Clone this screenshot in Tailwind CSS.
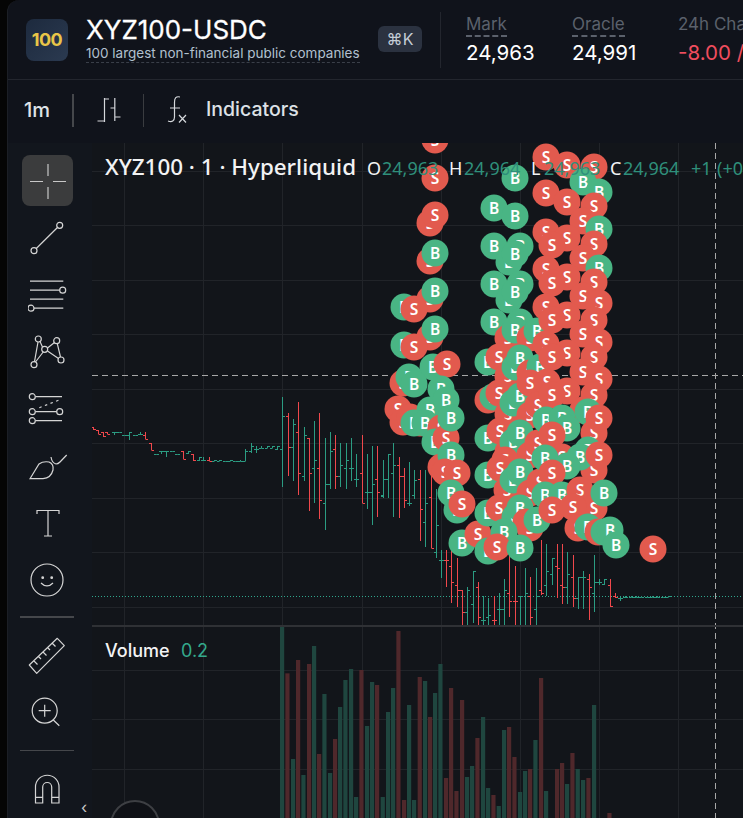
<!DOCTYPE html>
<html lang="en">

<head>
    <meta charset="UTF-8">
    <meta name="viewport" content="width=device-width, initial-scale=1.0">
    <title>XYZ100-USDC</title>
    <script src="https://cdn.jsdelivr.net/npm/@tailwindcss/browser@4"></script>
</head>

<body class="bg-[#050505] overflow-hidden font-['Inter',sans-serif]">
    <div class="ml-[7px] h-[818px] w-[736px] overflow-hidden rounded-tl-xl border-l border-[#1c1f26] bg-[#10131b] flex flex-col">

        <!-- market header -->
        <header class="h-[80px] shrink-0 border-b border-[#23262e] flex items-center pl-[18px] whitespace-nowrap">
            <div class="w-[42px] h-[42px] rounded-lg bg-gradient-to-br from-[#1d2a3e] to-[#2b3a50] flex items-center justify-center text-[#e9c648] text-[18px] font-bold tracking-[-0.5px] shrink-0">100</div>
            <div class="ml-[18px] w-[292px] shrink-0">
                <div class="text-[26px] leading-[30px] text-white mt-[-1px] [-webkit-text-stroke:0.3px_white]">XYZ100-USDC</div>
                <div class="text-[13.500px] leading-[16px] text-[#b2c0cf] border-b border-dashed border-[#3a3f49] w-fit pb-[1px]">100 largest non-financial public companies</div>
            </div>
            <div class="w-[44px] h-[26px] rounded-md bg-[#2b3240] text-[#c4ccd6] text-[16px] flex items-center justify-center shrink-0 mt-[-1px]">⌘K</div>
            <div class="w-px h-[56px] bg-[#23262e] ml-[18px] shrink-0"></div>
            <div class="ml-[25px] w-[106px] shrink-0">
                <div class="text-[#5b616c] text-[17px] leading-[21px] border-b-2 border-dashed border-[#5b616c] w-fit">Mark</div>
                <div class="text-white text-[20.500px] leading-[26px] mt-[3px]">24,963</div>
            </div>
            <div class="w-[106px] shrink-0">
                <div class="text-[#5b616c] text-[17px] leading-[21px] border-b-2 border-dashed border-[#5b616c] w-fit">Oracle</div>
                <div class="text-white text-[20.500px] leading-[26px] mt-[3px]">24,991</div>
            </div>
            <div class="shrink-0">
                <div class="text-[#5b616c] text-[17px] leading-[21px] pb-[2px]">24h Change</div>
                <div class="text-[#ef4d5e] text-[20.500px] leading-[26px] mt-[3px]">-8.00 / -0.03%</div>
            </div>
        </header>

        <!-- chart toolbar -->
        <div class="h-[63px] shrink-0 flex items-center text-[#dfe3e8] pb-[3px]">
            <div class="w-[64px] pl-[16px] text-[20px] font-medium">1m</div>
            <div class="w-[2px] h-[33px] bg-[#45474b]"></div>
            <div class="w-[69px] flex justify-center">
                <svg width="28" height="28" viewBox="0 0 28 28" fill="none" stroke="#d5d8dc" stroke-width="1.200">
                    <path d="M9.500 2V26M9.500 3H14M2.500 25H9.500M19.800 2V25M15.500 12H19.800M19.800 21H25.500" />
                </svg>
            </div>
            <div class="w-px h-[33px] bg-[#3a3c40]"></div>
            <svg class="ml-[19px]" width="26" height="30" viewBox="0 0 26 30" fill="none" stroke="#d5d8dc" stroke-width="1.200">
                <path d="M17 2C13 1 11.500 3 11.500 7V22C11.500 26 9 27.500 5 26M7 13H17M16 20L23 27.500M23 20L16 27.500" />
            </svg>
            <div class="ml-[17px] text-[19.500px] font-medium text-[#dde1e6]">Indicators</div>
        </div>

        <div class="flex-1 flex min-h-0">
            <!-- drawing tools -->
            <aside class="w-[84px] shrink-0 bg-[#12161d] relative pt-[9px] pl-[14px]">
                <div class="w-[52px] h-[57px] flex items-center">
                    <div class="w-[51px] h-[51px] rounded-lg bg-[#3b3c3d] flex items-center justify-center">
                        <svg width="40" height="40" viewBox="0 0 40 40" fill="none" stroke="#c8c8c8" stroke-width="1.200">
                            <path d="M20 3V15M20 26V38M2 20.500H15M25 20.500H38" />
                        </svg>
                    </div>
                </div>
                <div class="w-[52px] h-[57px] flex items-center justify-center">
                    <svg width="40" height="40" viewBox="0 0 40 40" fill="none" stroke="#d5d5d5" stroke-width="1.200">
                        <path d="M8 30.700L29.700 9.300" />
                        <circle cx="31.700" cy="7.300" r="3" />
                        <circle cx="6" cy="32.700" r="3" />
                    </svg>
                </div>
                <div class="w-[52px] h-[57px] flex items-center justify-center">
                    <svg width="40" height="40" viewBox="0 0 40 40" fill="none" stroke="#d5d5d5" stroke-width="1.200">
                        <path d="M2 6.200H35.300M2 15.200H31.700M2 24.200H35.300M6 33.200H35.300" />
                        <circle cx="34.700" cy="15.200" r="3" />
                        <circle cx="3" cy="33.200" r="3" />
                    </svg>
                </div>
                <div class="w-[52px] h-[57px] flex items-center justify-center">
                    <svg width="40" height="40" viewBox="0 0 40 40" fill="none" stroke="#d5d5d5" stroke-width="1.200">
                        <path d="M6.500 29.700L10 10M7.500 30L15.200 20M14.500 15L12 9.500M19.500 16L26.500 10.500M19.500 19L30.500 26.500M29.300 11.700L32.500 25" />
                        <circle cx="10.300" cy="7" r="3" />
                        <circle cx="28.700" cy="8.700" r="3" />
                        <circle cx="16.700" cy="17.300" r="3" />
                        <circle cx="6" cy="32.700" r="3" />
                        <circle cx="33" cy="28" r="3" />
                    </svg>
                </div>
                <div class="w-[52px] h-[57px] flex items-center justify-center">
                    <svg width="40" height="40" viewBox="0 0 40 40" fill="none" stroke="#d5d5d5" stroke-width="1.200">
                        <path d="M7.500 7.700H34M7.500 22.700H28.700M7.500 31.700H34" />
                        <path d="M11.300 18.700L32 10.700" stroke-dasharray="2.500 3.500" />
                        <circle cx="4.300" cy="7.700" r="3" />
                        <circle cx="4.300" cy="22.700" r="3" />
                        <circle cx="31.700" cy="22.700" r="3" />
                        <circle cx="4.300" cy="31.700" r="3" />
                    </svg>
                </div>
                <div class="w-[52px] h-[57px] flex items-center justify-center">
                    <svg width="40" height="40" viewBox="0 0 40 40" fill="none" stroke="#d5d5d5" stroke-width="1.200">
                        <path d="M2 32.700L11 18Q15 15 21 16Q26 18 25 24Q23 32 15 32.700Z" />
                        <path d="M23 11Q24 17 28 18Q30 18 32 16L38.700 9" />
                    </svg>
                </div>
                <div class="w-[52px] h-[57px] flex items-center justify-center">
                    <svg width="40" height="40" viewBox="0 0 40 40" fill="none" stroke="#d5d5d5" stroke-width="1.200">
                        <path d="M9 11V7.500H31V11M20 7.500V33M16 33H24" />
                    </svg>
                </div>
                <div class="w-[52px] h-[57px] flex items-center justify-center">
                    <svg width="40" height="40" viewBox="0 0 40 40" fill="none" stroke="#d5d5d5" stroke-width="1.200">
                        <circle cx="19" cy="20" r="16" />
                        <path d="M13 23Q19 29 25 23" />
                        <circle cx="14.700" cy="17.700" r="0.800" fill="#d5d5d5" />
                        <circle cx="23.700" cy="17.700" r="0.800" fill="#d5d5d5" />
                    </svg>
                </div>
                <div class="w-[54px] h-[2px] bg-[#45474b] mt-[8px] mb-[8px] ml-[-2px]"></div>
                <div class="w-[52px] h-[57px] flex items-center justify-center">
                    <svg width="40" height="40" viewBox="0 0 40 40" fill="none" stroke="#d5d5d5" stroke-width="1.200" stroke-linejoin="round">
                        <path d="M1.300 30L29.300 3.300L36.300 10.700L8.700 38.300ZM6 26L9.500 29.500M10.500 21.500L13 24M15 17L18.500 20.500M19.500 12.500L22 15M24 8L27.500 11.500" />
                    </svg>
                </div>
                <div class="w-[52px] h-[57px] flex items-center justify-center">
                    <svg width="40" height="40" viewBox="0 0 40 40" fill="none" stroke="#d5d5d5" stroke-width="1.200">
                        <circle cx="16.700" cy="18.700" r="12.500" />
                        <path d="M10.700 18.700H22.700M16.700 12.700V24.700M25.300 28L31.300 33.700" />
                    </svg>
                </div>
                <div class="w-[54px] h-px bg-[#45474b] mt-[10px] mb-[9px] ml-[-2px]"></div>
                <div class="w-[52px] h-[57px] flex items-center justify-center">
                    <svg width="40" height="40" viewBox="0 0 40 40" fill="none" stroke="#d5d5d5" stroke-width="1.200">
                        <path d="M7.500 34V18A11.700 11.700 0 0 1 31 18V34H23.700V18A4.500 4.500 0 0 0 14.700 18V34ZM7.500 28.300H14.700M23.700 28.300H31" />
                    </svg>
                </div>
                <div class="absolute left-[73px] top-[656px] text-[#c8c8c8] text-[16px] leading-none">‹</div>
            </aside>

            <!-- chart -->
            <main class="flex-1 relative bg-[#12151a] overflow-hidden">
                <svg id="chart" class="block" width="651" height="675" viewBox="92 143 651 675"></svg>

                <div class="absolute left-[13px] top-[11px] flex items-baseline whitespace-nowrap font-['Noto_Sans',sans-serif] text-[18px] leading-[26px]">
                    <span class="text-[#f2f3f4] text-[22.400px] font-medium w-[262px]">XYZ100 · 1 · Hyperliquid</span>
                    <span class="text-[#f2f3f4] w-[15px]">O</span><span class="text-[#2f8f7b] w-[67px]">24,963</span>
                    <span class="text-[#f2f3f4] w-[15px]">H</span><span class="text-[#2f8f7b] w-[67px]">24,964</span>
                    <span class="text-[#f2f3f4] w-[13px]">L</span><span class="text-[#2f8f7b] w-[66px]">24,963</span>
                    <span class="text-[#f2f3f4] w-[13px]">C</span><span class="text-[#2f8f7b] w-[68px]">24,964</span>
                    <span class="text-[#2f8f7b] w-[26px]">+1</span><span class="text-[#2f8f7b]">(+0.00%)</span>
                </div>
                <div class="absolute left-[13px] top-[495px] flex items-baseline whitespace-nowrap text-[18px] leading-[26px]">
                    <span class="text-[#f2f3f4] font-medium w-[76px]">Volume</span>
                    <span class="text-[#34a98c]">0.2</span>
                </div>
                <div class="absolute left-[18px] top-[657px] w-[50px] h-[50px] rounded-full border-2 border-[#3d3f43] bg-[#0f1116]"></div>
            </main>
        </div>
    </div>

    <script>
        const GREEN = '#2b9c82';
        const RED = '#f0484c';
        const NS = 'http://www.w3.org/2000/svg';
        const chart = document.getElementById('chart');

        function add(tag, attrs, parent) {
            const el = document.createElementNS(NS, tag);
            for (const k in attrs) el.setAttribute(k, attrs[k]);
            (parent || chart).appendChild(el);
            return el;
        }

        // grid
        const gridColor = '#212429';
        [124, 203, 282, 362, 441, 520, 599, 678].forEach(x => add('line', { x1: x + .5, x2: x + .5, y1: 143, y2: 818, stroke: gridColor }));
        [171, 225, 280, 334, 389, 443, 498, 552, 607, 670, 719, 769].forEach(y => add('line', { x1: 92, x2: 743, y1: y + .5, y2: y + .5, stroke: gridColor }));

        // volume, [x, top, colour]
        const vol = [
            [66, 20, 'g'], [82, 160, 'r'], [99, 417, 'g'], [114, 120, 'r'], [130, 465, 'g'], [147, 132, 'r'], [162, 78, 'g'], [177, 402, 'r'],
            [193, 222, 'g'], [210, 459, 'g'], [225, 357, 'r'], [240, 261, 'g'], [256, 180, 'g'], [273, 147, 'g'], [288, 531, 'g'], [304, 150, 'r'],
            [321, 318, 'g'], [336, 186, 'g'], [351, 195, 'r'], [368, 531, 'g'], [384, 276, 'g'], [399, 204, 'g'], [415, 33, 'r'], [432, 540, 'r'],
            [447, 255, 'g'], [462, 540, 'g'], [479, 171, 'r'], [495, 183, 'g'], [510, 291, 'r'], [525, 219, 'g'], [541, 132, 'g'], [558, 474, 'r'],
            [573, 204, 'r'], [589, 513, 'r'], [606, 240, 'r'], [621, 471, 'g'], [636, 438, 'g'], [652, 354, 'r'], [669, 291, 'g'], [684, 504, 'g'],
            [700, 525, 'r'], [716, 558, 'g']
        ];
        vol.forEach(v => {
            const x = 260 + v[0] / 3, top = 620 + v[1] / 3;
            add('rect', { x: x - 2, y: top, width: 4.2, height: 818 - top, fill: v[2] === 'g' ? '#1f463f' : '#4f282b' });
        });
        const vol2 = [
            [12, 570, 'g'], [27, 561, 'r'], [43, 651, 'r'], [60, 756, 'g'], [75, 693, 'g'], [90, 687, 'r'], [106, 600, 'g'], [123, 414, 'r'],
            [138, 753, 'g'], [171, 687, 'r'], [186, 669, 'r'], [201, 732, 'g'], [217, 639, 'r'], [233, 687, 'g'], [249, 720, 'g'], [265, 714, 'r'],
            [282, 495, 'g'], [328, 819, 'r']
        ];
        vol2.forEach(v => {
            const x = 500 + v[0] / 3, top = 540 + v[1] / 3;
            add('rect', { x: x - 2, y: top, width: 4.2, height: 818 - top, fill: v[2] === 'g' ? '#1f463f' : '#4f282b' });
        });

        // main pane clip
        const defs = add('defs', {});
        const clip = add('clipPath', { id: 'pane' }, defs);
        add('rect', { x: 92, y: 143, width: 651, height: 482 }, clip);
        const pane = add('g', { 'clip-path': 'url(#pane)' });

        // last price line
        add('line', { x1: 92, x2: 743, y1: 596.5, y2: 596.5, stroke: '#2fa58c', 'stroke-dasharray': '1 2' }, pane);

        // crosshair sits under the trade bubbles
        add('line', { x1: 92, x2: 743, y1: 375.5, y2: 375.5, stroke: '#a8a8a8', 'stroke-dasharray': '6 4' }, pane);
        add('line', { x1: 715.5, x2: 715.5, y1: 143, y2: 818, stroke: '#a8a8a8', 'stroke-dasharray': '6 4' });

        // ohlc, read off zoomed crops: [x, high, low, open, close, colour]
        function bars(ox, oy, rows) {
            rows.forEach(r => {
                const x = Math.round(ox + r[0] / 3) + .5;
                const y = v => Math.round(oy + v / 3);
                const c = r[5] === 'r' ? RED : GREEN;
                add('path', {
                    d: `M${x} ${y(r[1])}V${y(r[2])}M${x - 2.5} ${y(r[3]) + .5}H${x}M${x} ${y(r[4]) + .5}H${x + 2.5}`,
                    stroke: c, fill: 'none', 'stroke-width': 1
                }, pane);
            });
        }
        bars(90, 390, [
            [8, 112, 120, 112, 118, 'r'], [23, 121, 133, 121, 133, 'r'], [39, 127, 142, 127, 137, 'r'], [52, 127, 133, 127, 133, 'r'], [72, 127, 134, 127, 127, 'g'], [88, 127, 127, 127, 127, 'g'],
            [103, 136, 136, 136, 136, 'g'], [118, 127, 149, 136, 127, 'g'], [136, 136, 136, 136, 136, 'g'], [151, 127, 136, 133, 133, 'g'], [166, 127, 148, 136, 148, 'r'], [182, 160, 181, 160, 181, 'r'],
            [198, 193, 193, 193, 193, 'g'], [214, 184, 192, 184, 184, 'g'], [229, 184, 200, 184, 184, 'g'], [246, 184, 184, 184, 184, 'g'], [262, 193, 193, 193, 193, 'g'], [278, 184, 208, 184, 208, 'r'],
            [293, 184, 191, 190, 184, 'g'], [310, 193, 214, 193, 211, 'r'], [326, 202, 214, 211, 202, 'g'], [340, 202, 214, 211, 211, 'g'], [358, 202, 214, 211, 214, 'r'], [372, 211, 214, 214, 211, 'g'],
            [388, 211, 214, 214, 211, 'g'], [405, 212, 214, 214, 214, 'g'], [420, 211, 214, 214, 211, 'g'], [435, 212, 214, 214, 214, 'g'], [450, 211, 214, 214, 214, 'g'], [466, 178, 214, 214, 184, 'g'],
            [484, 160, 190, 184, 169, 'g'], [499, 169, 190, 178, 178, 'g'], [514, 169, 175, 175, 175, 'g'], [530, 169, 175, 175, 169, 'g'], [547, 169, 175, 175, 169, 'g'], [562, 169, 181, 178, 169, 'g'],
            [577, 22, 290, 178, 78, 'g'], [595, 70, 258, 78, 170, 'r'], [610, 88, 272, 170, 103, 'g'], [625, 37, 315, 127, 250, 'r'], [643, 112, 272, 259, 136, 'g'], [657, 145, 362, 145, 250, 'r'],
            [673, 94, 338, 235, 211, 'g'], [688, 70, 386, 235, 331, 'r'], [706, 145, 419, 340, 283, 'g'], [721, 127, 296, 283, 184, 'g'], [736, 136, 296, 178, 259, 'r'], [751, 160, 290, 259, 226, 'g'],
            [769, 160, 296, 235, 211, 'g'], [784, 145, 272, 235, 235, 'g'], [799, 193, 290, 268, 268, 'g'], [817, 136, 338, 250, 338, 'r'], [832, 193, 356, 307, 307, 'g'], [847, 168, 404, 307, 283, 'g'],
            [862, 168, 380, 268, 307, 'r'], [880, 210, 323, 316, 268, 'g'], [895, 193, 323, 268, 193, 'g']
        ]);
        bars(380, 340, [
            [10, 360, 467, 467, 417, 'g'], [25, 343, 472, 417, 343, 'g'], [40, 310, 530, 400, 376, 'g'], [58, 352, 535, 376, 408, 'r'], [73, 385, 505, 408, 480, 'r'], [88, 366, 497, 490, 490, 'g'],
            [103, 390, 478, 465, 420, 'g'], [120, 390, 603, 418, 508, 'r'], [135, 390, 620, 546, 490, 'g'], [152, 405, 625, 472, 625, 'r'], [167, 447, 653, 636, 556, 'g']
        ]);
        bars(440, 550, [
            [3, 0, 85, 30, 30, 'g'], [19, 0, 110, 30, 30, 'r'], [34, 0, 160, 48, 97, 'r'], [52, 23, 170, 105, 120, 'r'], [67, 120, 225, 120, 187, 'r'], [82, 110, 225, 187, 121, 'g'],
            [98, 63, 218, 162, 63, 'g'], [115, 96, 225, 112, 202, 'r'], [130, 138, 225, 210, 210, 'g'], [145, 144, 225, 202, 195, 'g'], [163, 138, 225, 210, 210, 'r'], [178, 128, 225, 178, 178, 'g'],
            [193, 87, 225, 178, 121, 'g'], [208, 0, 200, 130, 154, 'r'], [226, 48, 225, 154, 154, 'r']
        ]);
        bars(500, 540, [
            [61, 168, 255, 168, 168, 'g'], [76, 84, 255, 255, 160, 'g'], [91, 111, 255, 169, 232, 'r'],
            [109, 84, 255, 208, 169, 'g'], [124, 0, 165, 151, 160, 'r'], [139, 12, 168, 136, 94, 'g'], [157, 54, 135, 103, 55, 'g'], [172, 12, 174, 79, 85, 'r'], [187, 12, 192, 136, 142, 'r'],
            [202, 36, 192, 142, 103, 'g'], [220, 45, 202, 112, 175, 'r'], [235, 112, 207, 175, 112, 'g'], [250, 93, 207, 112, 112, 'g'], [268, 102, 240, 118, 142, 'r'], [283, 45, 216, 160, 127, 'g'],
            [298, 117, 135, 127, 127, 'g'], [313, 118, 135, 133, 118, 'g'], [331, 117, 200, 136, 199, 'r'], [346, 160, 174, 169, 172, 'r'], [361, 172, 183, 175, 175, 'g'], [376, 169, 175, 172, 172, 'g'],
            [392, 169, 172, 172, 172, 'g'], [408, 169, 172, 172, 172, 'g'], [424, 169, 172, 172, 172, 'g'], [440, 171, 172, 172, 172, 'g'], [456, 169, 172, 172, 172, 'g'], [472, 169, 172, 172, 172, 'g'],
            [488, 171, 172, 172, 172, 'g'], [504, 169, 172, 172, 169, 'g']
        ]);

        // trade bubbles, in draw order
        const trades = 'S435,140 S435,178 B515,178 S430,223 S435,215 S430,261 B435,253 B404,307 S430,299 B435,291 S414,309 B404,345 S430,337 B435,329 S414,347 ' +
            'B433,367 S447,364 S403,383 B409,377 B414,384 S398,409 S403,422 S410,417 S420,423 B430,410 B414,423 B425,423 B441,389 B446,400 S441,428 B435,442 S446,438 B451,418 S441,467 B451,455 S445,472 S457,473 B451,493 B457,510 S462,504 B462,543 S478,534 ' +
            'B494,208 B515,216 B494,246 B520,246 B509,262 B515,254 B494,284 B520,284 B509,300 B515,292 B494,322 B520,322 S508,338 B515,330 S530,338 B537,331 ' +
            'B488,362 S499,357 S508,376 B515,367 B520,358 S530,373 B540,367 S488,400 B493,397 S499,393 S508,414 B513,403 B520,396 S530,383 S530,415 S538,405 ' +
            'B488,438 S500,431 S508,452 B513,442 B520,433 S530,455 S538,443 B488,475 S505,460 S500,468 S507,490 B513,480 B520,472 S530,493 S540,482 ' +
            'B488,513 S499,508 B515,517 B520,508 S526,522 S530,528 B537,520 B504,532 B488,551 S497,547 B520,548 ' +
            'S546,157 S567,165 S594,167 B583,182 B599,192 S546,193 S567,202 S594,206 S583,221 B599,229 S546,232 S567,238 S552,245 S594,244 S583,258 B599,268 ' +
            'S546,269 S567,277 S552,283 S594,282 S583,296 S599,303 S546,307 S567,315 S552,320 S594,320 S583,334 S599,342 S546,344 S567,353 S552,357 S594,357 S583,372 S599,379 ' +
            'S547,382 S567,391 S552,395 S594,395 S583,410 B588,412 S594,433 S599,418 B546,420 B562,418 B567,428 S552,435 S594,470 S562,457 B588,450 B580,457 S599,455 B545,458 B567,466 S552,473 ' +
            'B545,495 B562,495 S552,510 S580,490 S594,508 S573,507 S578,528 B588,527 S598,532 B604,493 B604,532 B610,530 B616,545 S653,549';

        trades.split(' ').forEach(t => {
            const side = t[0];
            const [x, y] = t.slice(1).split(',').map(Number);
            add('circle', { cx: x, cy: y, r: 13.5, fill: side === 'S' ? '#e25a4e' : '#49b584' }, pane);
            const label = add('text', { x: x, y: y + 5.5, 'text-anchor': 'middle', fill: '#fff', 'font-size': 15.5, 'font-weight': 600, 'font-family': 'Noto Sans, sans-serif' }, pane);
            label.textContent = side;
        });

        // pane divider
        add('rect', { x: 92, y: 625, width: 651, height: 2, fill: '#2f3135' });
    </script>
</body>

</html>
